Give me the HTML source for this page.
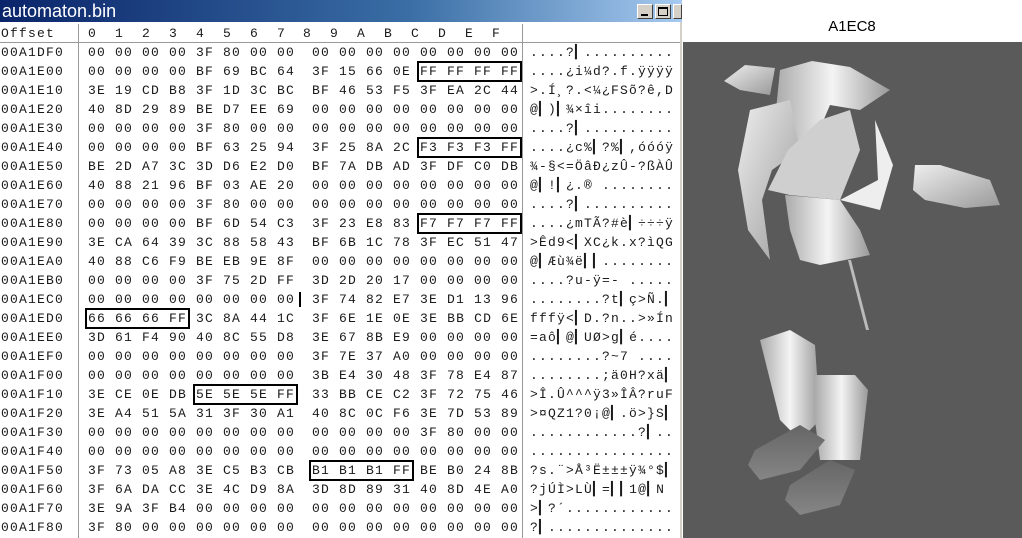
<!DOCTYPE html>
<html><head><meta charset="utf-8"><style>
*{margin:0;padding:0;box-sizing:border-box}
body{width:1022px;height:538px;overflow:hidden;background:#fff;position:relative;font-family:"Liberation Mono",monospace}
.t{position:absolute;left:0;top:0;width:682px;height:22px;background:linear-gradient(90deg,#0a246a,#3a6ea5 60%,#a6caf0);color:#fff;font:18px "Liberation Sans",sans-serif;padding:1px 0 0 2px}
.btn{position:absolute;top:4px;width:16px;height:15px;background:#d4d0c8;border:1px solid;border-color:#fff #404040 #404040 #fff}
.r{position:absolute;left:0;height:19px;font-size:13px;letter-spacing:1.2px;line-height:19px;white-space:pre;color:#1a1a1a}
.o{position:absolute;left:1px}
.h{position:absolute;left:88px}
.a{position:absolute;left:530px}
.g{display:inline-block;width:8px}
.b{outline:2px solid #000;outline-offset:1px}
.v{position:absolute;top:24px;width:1px;height:514px;background:#999}
</style></head><body>
<div class="t">automaton.bin</div>
<div class="btn" style="left:637px"><div style="position:absolute;left:3px;top:9px;width:7px;height:2px;background:#000"></div></div>
<div class="btn" style="left:655px"><div style="position:absolute;left:2px;top:2px;width:10px;height:9px;border:1px solid #000;border-top-width:2px"></div></div>
<div class="btn" style="left:673px;width:9px"></div>
<div style="position:absolute;left:0;top:42px;width:682px;height:1px;background:#999"></div>
<div class="v" style="left:78px"></div>
<div class="v" style="left:522px"></div>
<div style="position:absolute;left:680px;top:22px;width:2px;height:516px;background:#d4d0c8"></div>
<div class="r" style="top:24px"><span class="o">Offset</span><span class="h">0  1  2  3  4  5  6  7 <span class="g"></span>8  9  A  B  C  D  E  F</span></div>
<div class="r" style="top:43px"><span class="o">00A1DF0</span><span class="h">00 00 00 00 3F 80 00 00 <span class="g"></span>00 00 00 00 00 00 00 00</span><span class="a">....?▎..........</span></div>
<div class="r" style="top:62px"><span class="o">00A1E00</span><span class="h">00 00 00 00 BF 69 BC 64 <span class="g"></span>3F 15 66 0E <span class="b">FF FF FF FF</span></span><span class="a">....¿i¼d?.f.ÿÿÿÿ</span></div>
<div class="r" style="top:81px"><span class="o">00A1E10</span><span class="h">3E 19 CD B8 3F 1D 3C BC <span class="g"></span>BF 46 53 F5 3F EA 2C 44</span><span class="a">&gt;.Í¸?.&lt;¼¿FSõ?ê,D</span></div>
<div class="r" style="top:100px"><span class="o">00A1E20</span><span class="h">40 8D 29 89 BE D7 EE 69 <span class="g"></span>00 00 00 00 00 00 00 00</span><span class="a">@▎)▎¾×îi........</span></div>
<div class="r" style="top:119px"><span class="o">00A1E30</span><span class="h">00 00 00 00 3F 80 00 00 <span class="g"></span>00 00 00 00 00 00 00 00</span><span class="a">....?▎..........</span></div>
<div class="r" style="top:138px"><span class="o">00A1E40</span><span class="h">00 00 00 00 BF 63 25 94 <span class="g"></span>3F 25 8A 2C <span class="b">F3 F3 F3 FF</span></span><span class="a">....¿c%▎?%▎,óóóÿ</span></div>
<div class="r" style="top:157px"><span class="o">00A1E50</span><span class="h">BE 2D A7 3C 3D D6 E2 D0 <span class="g"></span>BF 7A DB AD 3F DF C0 DB</span><span class="a">¾-§&lt;=ÖâÐ¿zÛ-?ßÀÛ</span></div>
<div class="r" style="top:176px"><span class="o">00A1E60</span><span class="h">40 88 21 96 BF 03 AE 20 <span class="g"></span>00 00 00 00 00 00 00 00</span><span class="a">@▎!▎¿.® ........</span></div>
<div class="r" style="top:195px"><span class="o">00A1E70</span><span class="h">00 00 00 00 3F 80 00 00 <span class="g"></span>00 00 00 00 00 00 00 00</span><span class="a">....?▎..........</span></div>
<div class="r" style="top:214px"><span class="o">00A1E80</span><span class="h">00 00 00 00 BF 6D 54 C3 <span class="g"></span>3F 23 E8 83 <span class="b">F7 F7 F7 FF</span></span><span class="a">....¿mTÃ?#è▎÷÷÷ÿ</span></div>
<div class="r" style="top:233px"><span class="o">00A1E90</span><span class="h">3E CA 64 39 3C 88 58 43 <span class="g"></span>BF 6B 1C 78 3F EC 51 47</span><span class="a">&gt;Êd9&lt;▎XC¿k.x?ìQG</span></div>
<div class="r" style="top:252px"><span class="o">00A1EA0</span><span class="h">40 88 C6 F9 BE EB 9E 8F <span class="g"></span>00 00 00 00 00 00 00 00</span><span class="a">@▎Æù¾ë▎▎........</span></div>
<div class="r" style="top:271px"><span class="o">00A1EB0</span><span class="h">00 00 00 00 3F 75 2D FF <span class="g"></span>3D 2D 20 17 00 00 00 00</span><span class="a">....?u-ÿ=- .....</span></div>
<div class="r" style="top:290px"><span class="o">00A1EC0</span><span class="h">00 00 00 00 00 00 00 00 <span class="g"></span>3F 74 82 E7 3E D1 13 96</span><span class="a">........?t▎ç&gt;Ñ.▎</span></div>
<div style="position:absolute;left:299px;top:292px;width:2px;height:15px;background:#000"></div>
<div class="r" style="top:309px"><span class="o">00A1ED0</span><span class="h"><span class="b">66 66 66 FF</span> 3C 8A 44 1C <span class="g"></span>3F 6E 1E 0E 3E BB CD 6E</span><span class="a">fffÿ&lt;▎D.?n..&gt;»Ín</span></div>
<div class="r" style="top:328px"><span class="o">00A1EE0</span><span class="h">3D 61 F4 90 40 8C 55 D8 <span class="g"></span>3E 67 8B E9 00 00 00 00</span><span class="a">=aô▎@▎UØ&gt;g▎é....</span></div>
<div class="r" style="top:347px"><span class="o">00A1EF0</span><span class="h">00 00 00 00 00 00 00 00 <span class="g"></span>3F 7E 37 A0 00 00 00 00</span><span class="a">........?~7 ....</span></div>
<div class="r" style="top:366px"><span class="o">00A1F00</span><span class="h">00 00 00 00 00 00 00 00 <span class="g"></span>3B E4 30 48 3F 78 E4 87</span><span class="a">........;ä0H?xä▎</span></div>
<div class="r" style="top:385px"><span class="o">00A1F10</span><span class="h">3E CE 0E DB <span class="b">5E 5E 5E FF</span> <span class="g"></span>33 BB CE C2 3F 72 75 46</span><span class="a">&gt;Î.Û^^^ÿ3»ÎÂ?ruF</span></div>
<div class="r" style="top:404px"><span class="o">00A1F20</span><span class="h">3E A4 51 5A 31 3F 30 A1 <span class="g"></span>40 8C 0C F6 3E 7D 53 89</span><span class="a">&gt;¤QZ1?0¡@▎.ö&gt;}S▎</span></div>
<div class="r" style="top:423px"><span class="o">00A1F30</span><span class="h">00 00 00 00 00 00 00 00 <span class="g"></span>00 00 00 00 3F 80 00 00</span><span class="a">............?▎..</span></div>
<div class="r" style="top:442px"><span class="o">00A1F40</span><span class="h">00 00 00 00 00 00 00 00 <span class="g"></span>00 00 00 00 00 00 00 00</span><span class="a">................</span></div>
<div class="r" style="top:461px"><span class="o">00A1F50</span><span class="h">3F 73 05 A8 3E C5 B3 CB <span class="g"></span><span class="b">B1 B1 B1 FF</span> BE B0 24 8B</span><span class="a">?s.¨&gt;Å³Ë±±±ÿ¾°$▎</span></div>
<div class="r" style="top:480px"><span class="o">00A1F60</span><span class="h">3F 6A DA CC 3E 4C D9 8A <span class="g"></span>3D 8D 89 31 40 8D 4E A0</span><span class="a">?jÚÌ&gt;LÙ▎=▎▎1@▎N </span></div>
<div class="r" style="top:499px"><span class="o">00A1F70</span><span class="h">3E 9A 3F B4 00 00 00 00 <span class="g"></span>00 00 00 00 00 00 00 00</span><span class="a">&gt;▎?´............</span></div>
<div class="r" style="top:518px"><span class="o">00A1F80</span><span class="h">3F 80 00 00 00 00 00 00 <span class="g"></span>00 00 00 00 00 00 00 00</span><span class="a">?▎..............</span></div>

<div style="position:absolute;left:682px;top:0;width:340px;height:42px;background:#fff;font:15px 'Liberation Sans',sans-serif;text-align:center;line-height:54px">A1EC8</div>
<svg style="position:absolute;left:683px;top:42px" width="339" height="496" viewBox="683 42 339 496">
<defs>
<linearGradient id="w" x1="0" y1="0" x2="1" y2="1"><stop offset="0" stop-color="#eee"/><stop offset="1" stop-color="#999"/></linearGradient>
<linearGradient id="w2" x1="0" y1="0" x2="1" y2="0"><stop offset="0" stop-color="#aaa"/><stop offset=".5" stop-color="#f4f4f4"/><stop offset="1" stop-color="#999"/></linearGradient>
<linearGradient id="d" x1="0" y1="0" x2="0" y2="1"><stop offset="0" stop-color="#666"/><stop offset="1" stop-color="#858585"/></linearGradient>
</defs>
<rect x="683" y="42" width="339" height="496" fill="#5a5a5a"/>
<path d="M724 81 L745 65 L775 68 L770 95 L740 90 Z" fill="url(#w)"/>
<path d="M780 70 L812 61 L850 67 L890 90 L860 110 L830 105 L815 140 L790 150 L775 120 Z" fill="url(#w2)"/>
<path d="M750 110 L790 100 L800 150 L772 170 L762 200 L770 260 L748 230 L738 170 Z" fill="url(#w)"/>
<path d="M788 150 L820 120 L850 110 L860 150 L840 200 L790 195 L768 190 Z" fill="#cfcfcf"/>
<path d="M785 195 L840 200 L860 230 L870 255 L820 265 L800 260 L790 230 Z" fill="url(#w2)"/>
<path d="M840 200 L880 210 L893 165 L875 120 L878 180 Z" fill="#eee"/>
<path d="M915 165 L940 165 L990 180 L1000 205 L965 208 L925 200 L913 190 Z" fill="url(#w)"/>
<path d="M848 260 L866 330 L869 330 L851 260 Z" fill="#bbb"/>
<path d="M760 340 L790 330 L815 345 L820 420 L800 440 L780 420 L770 380 Z" fill="url(#w2)"/>
<path d="M815 375 L855 375 L868 390 L860 460 L820 460 L815 420 Z" fill="url(#w2)"/>
<path d="M755 450 L800 425 L825 440 L800 470 L760 480 L748 465 Z" fill="url(#d)"/>
<path d="M790 485 L830 460 L855 470 L840 505 L800 515 L785 500 Z" fill="url(#d)"/>
</svg>
</body></html>
